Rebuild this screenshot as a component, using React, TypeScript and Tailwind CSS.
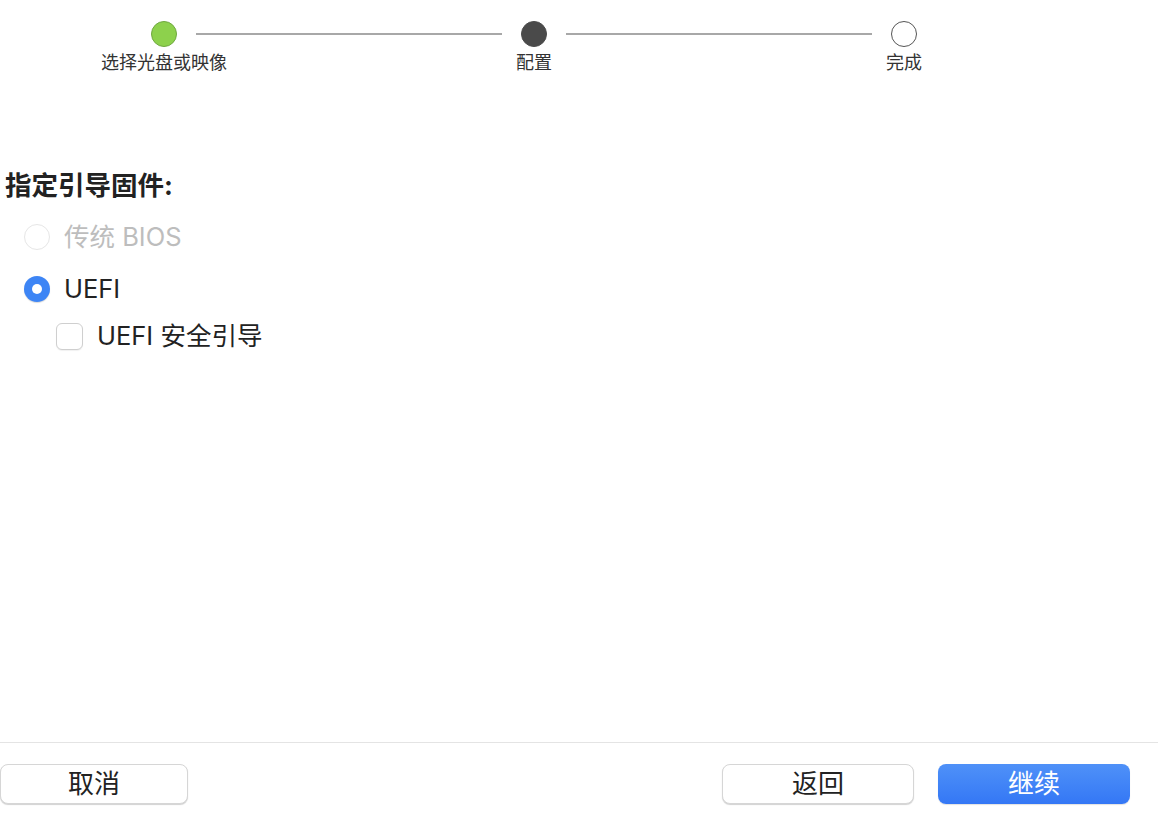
const FONT = "font-['Inter','Noto_Sans_CJK_SC',sans-serif]";

type StepState = "done" | "current" | "todo";

function Step({ label, state }: { label: string; state: StepState }) {
  const circle =
    state === "done"
      ? "bg-[#8dd14c] border-[#6fa83f]"
      : state === "current"
        ? "bg-[#4a4a4a] border-[#4a4a4a]"
        : "bg-white border-[#555555]";
  return (
    <div className="flex w-[26px] flex-col items-center">
      <div className={`h-[26px] w-[26px] rounded-full border ${circle}`} />
      <div className="mt-[6px] whitespace-nowrap text-[18px] leading-[20px] text-[#333333]">
        {label}
      </div>
    </div>
  );
}

function StepLine() {
  return <div className="mx-[19px] mt-[12px] h-[2px] w-[306px] bg-[#a8a8a8]" />;
}

function Radio({
  label,
  checked,
  disabled,
}: {
  label: string;
  checked?: boolean;
  disabled?: boolean;
}) {
  return (
    <div className="flex h-[52px] items-center pl-[19px]">
      {checked ? (
        <div className="flex h-[26px] w-[26px] items-center justify-center rounded-full bg-[#3d85f5] shadow-[0_1px_1px_rgba(0,0,0,0.15)]">
          <div className="h-[10px] w-[10px] rounded-full bg-white" />
        </div>
      ) : (
        <div
          className={`h-[26px] w-[26px] rounded-full border bg-white ${
            disabled ? "border-[#e6e6e6]" : "border-[#c4c4c4]"
          }`}
        />
      )}
      <span
        className={`ml-[14px] text-[25.5px] leading-[30px] ${
          disabled ? "text-[#bdbdbd]" : "text-[#222222]"
        }`}
      >
        {label}
      </span>
    </div>
  );
}

function Button({ label, primary, className = "" }: { label: string; primary?: boolean; className?: string }) {
  return (
    <button
      type="button"
      className={`flex h-[40px] items-center justify-center rounded-[8px] text-[26px] leading-[30px] ${
        primary
          ? "bg-gradient-to-b from-[#4f91f8] to-[#3477f5] text-white shadow-[0_1px_1px_rgba(0,0,0,0.12)]"
          : "border border-[#d6d6d6] bg-white text-[#222222] shadow-[0_1px_1px_rgba(0,0,0,0.18)]"
      } ${className}`}
    >
      {label}
    </button>
  );
}

export default function App() {
  return (
    <div className={`flex h-[818px] w-[1158px] flex-col bg-white ${FONT}`}>
      <div className="flex items-start pl-[151px] pt-[21px]">
        <Step label="选择光盘或映像" state="done" />
        <StepLine />
        <Step label="配置" state="current" />
        <StepLine />
        <Step label="完成" state="todo" />
      </div>

      <div className="flex-1 pl-[5px] pt-[97px]">
        <div className="h-[30px] text-[26.5px] font-bold leading-[30px] text-[#222222]">
          指定引导固件:
        </div>
        <div className="mt-[11px]">
          <Radio label="传统 BIOS" disabled />
          <Radio label="UEFI" checked />
          <div className="flex h-[42px] items-center pl-[51px]">
            <div className="h-[27px] w-[27px] rounded-[6px] border border-[#cfcfcf] bg-white shadow-[0_1px_1px_rgba(0,0,0,0.06)]" />
            <span className="ml-[14px] text-[25.5px] leading-[30px] text-[#222222]">UEFI 安全引导</span>
          </div>
        </div>
      </div>

      <div className="flex h-[76px] items-start border-t border-[#e4e4e4] pt-[21px]">
        <Button label="取消" className="w-[188px]" />
        <div className="flex-1" />
        <Button label="返回" className="w-[192px]" />
        <Button label="继续" primary className="ml-[24px] mr-[28px] w-[192px]" />
      </div>
    </div>
  );
}
